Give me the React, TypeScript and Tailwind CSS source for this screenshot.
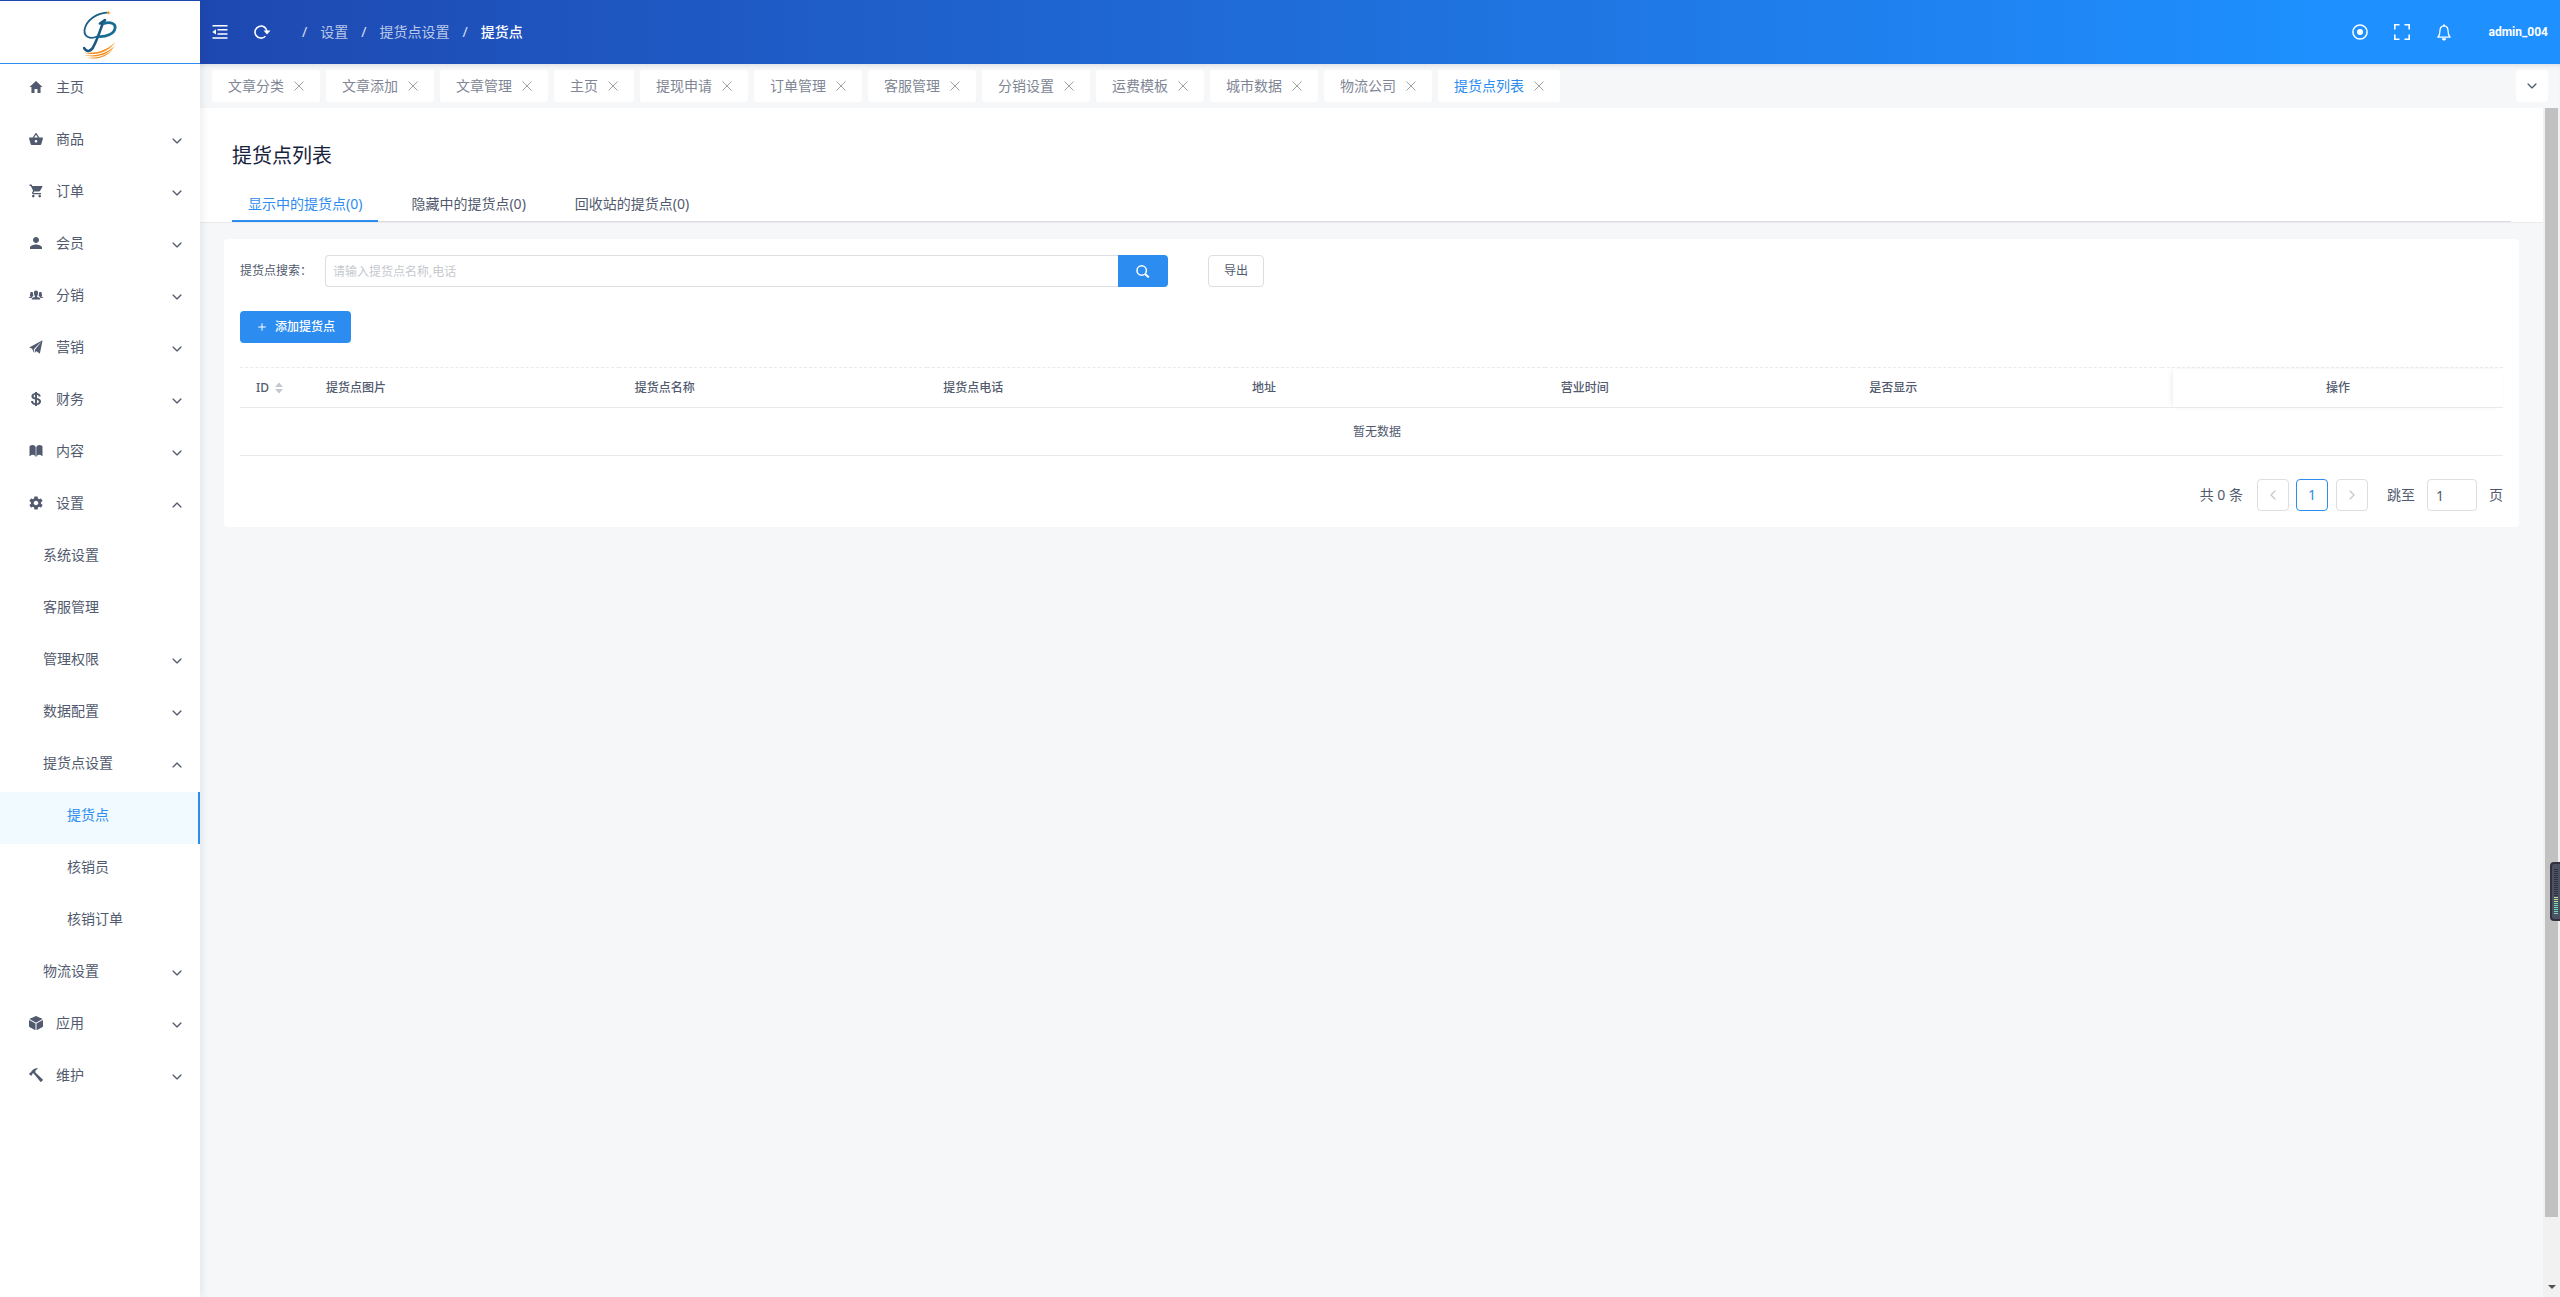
import React from "react";
import {
  IoIosArrowDown, IoIosArrowUp, IoIosArrowBack, IoIosArrowForward, IoMdHome, IoMdBasket, IoMdCart, IoMdPerson,
  IoIosPeople, IoIosPaperPlane, IoLogoUsd, IoIosBook, IoMdSettings, IoMdCube, IoMdHammer, IoMdAdd,
} from "react-icons/io";

type Icon = React.ComponentType<{ className?: string }>;

const FullscreenIcon = () => (
  <svg viewBox="0 0 16 16" className="size-4" fill="none" stroke="currentColor" strokeWidth="1.6">
    <path d="M0.8 5.500V0.800H5.500M10.500 0.800h4.700V5.500M15.200 10.500v4.700H10.500M5.500 15.200H0.800V10.500" />
  </svg>
);

const FoldIcon = () => (
  <svg viewBox="0 0 16 14" className="h-3.5 w-4" fill="currentColor">
    <path d="M0.500 0h15v1.500H0.500zM5.500 4h10v1.500h-10zM5.500 8.200h10v1.500h-10zM0.500 12.300h15v1.500H0.500zM4 4.200v5.400L0.300 6.900z" />
  </svg>
);

const ReloadIcon = () => (
  <svg viewBox="0 0 17 14" className="h-3.5 w-[17px]">
    <path d="M13 6.500A6 6 0 1 0 11.300 11.300" fill="none" stroke="currentColor" strokeWidth="1.600" />
    <path d="M9.600 5.600H16.500L13 9.400z" fill="currentColor" />
  </svg>
);

const TargetIcon = () => (
  <svg viewBox="0 0 16 16" className="size-4">
    <circle cx="8" cy="8" r="7.100" fill="none" stroke="currentColor" strokeWidth="1.500" />
    <circle cx="8" cy="8" r="3" fill="currentColor" />
  </svg>
);

const BellIcon = () => (
  <svg viewBox="0 0 14 17" className="h-[17px] w-3.5">
    <path d="M7 1.800C4.300 2 3 4 3 6.500C3 10 2.500 11.500 0.900 13.200H13.100C11.500 11.500 11 10 11 6.500C11 4 9.700 2 7 1.800z" fill="none" stroke="currentColor" strokeWidth="1.300" strokeLinejoin="round" />
    <path d="M6 0.500h2v1.500H6zM4.800 14.200h4.400C9 15.800 8 16.500 7 16.500S5 15.800 4.800 14.200z" fill="currentColor" />
  </svg>
);

const SearchIcon = () => (
  <svg viewBox="0 0 14 13" className="h-[13px] w-3.5" fill="none" stroke="currentColor" strokeWidth="1.500">
    <circle cx="5.700" cy="5.500" r="4.700" />
    <path d="M9 9l3.800 3.300" strokeWidth="2" />
  </svg>
);

const CrossIcon = () => (
  <svg viewBox="0 0 10 10" className="size-2.5" stroke="currentColor" strokeWidth="1">
    <path d="M0.500 0.500l9 9M9.500 0.500l-9 9" />
  </svg>
);

const Logo = () => (
  <svg viewBox="0 0 34 48" className="h-12 w-[34px]" fill="none" strokeLinecap="round" strokeLinejoin="round">
    <path d="M24 1.600C14 2 3 9 1.500 19C1 26 7 28.500 14 25.500" stroke="#1b5f86" strokeWidth="1.800" />
    <path d="M17 12.500L22 9L19.500 13C17 20 14 29 10.500 35.500C8.500 40 4 42 1 37" stroke="#1a5883" strokeWidth="2.600" />
    <path d="M21 12.500C27 10.500 33 12 32 17.500C31 23 23 26 15.500 25.500" stroke="#1b6c92" strokeWidth="2.800" />
    <path d="M25.500 0l.8 1.300 1.500.5-1.500.6-.8 1.300-.8-1.300-1.500-.6 1.500-.5z" fill="#f39121" />
    <path d="M1 41.500C15 43 26 38 32.500 30.500C27 40 14 46 1 41.500zM0.500 44C16 46 27 40 32 34.500C27 43 14 48 0.500 44zM3 46.500C16 48 25 43 30 38.500C24 46 13 49.500 3 46.500z" fill="#f39121" />
  </svg>
);

type Item = { label: string; icon?: Icon; level: number; arrow?: "up" | "down"; active?: boolean };

const menu: Item[] = [
  { label: "主页", icon: IoMdHome, level: 0 },
  { label: "商品", icon: IoMdBasket, level: 0, arrow: "down" },
  { label: "订单", icon: IoMdCart, level: 0, arrow: "down" },
  { label: "会员", icon: IoMdPerson, level: 0, arrow: "down" },
  { label: "分销", icon: IoIosPeople, level: 0, arrow: "down" },
  { label: "营销", icon: IoIosPaperPlane, level: 0, arrow: "down" },
  { label: "财务", icon: IoLogoUsd, level: 0, arrow: "down" },
  { label: "内容", icon: IoIosBook, level: 0, arrow: "down" },
  { label: "设置", icon: IoMdSettings, level: 0, arrow: "up" },
  { label: "系统设置", level: 1 },
  { label: "客服管理", level: 1 },
  { label: "管理权限", level: 1, arrow: "down" },
  { label: "数据配置", level: 1, arrow: "down" },
  { label: "提货点设置", level: 1, arrow: "up" },
  { label: "提货点", level: 2, active: true },
  { label: "核销员", level: 2 },
  { label: "核销订单", level: 2 },
  { label: "物流设置", level: 1, arrow: "down" },
  { label: "应用", icon: IoMdCube, level: 0, arrow: "down" },
  { label: "维护", icon: IoMdHammer, level: 0, arrow: "down" },
];

const pageTabs = ["文章分类", "文章添加", "文章管理", "主页", "提现申请", "订单管理", "客服管理", "分销设置", "运费模板", "城市数据", "物流公司", "提货点列表"];
const listTabs = ["显示中的提货点(0)", "隐藏中的提货点(0)", "回收站的提货点(0)"];
const columns = ["提货点图片", "提货点名称", "提货点电话", "地址", "营业时间", "是否显示"];
const indent = ["pl-7", "pl-[43px]", "pl-[67px]"];

function Sidebar() {
  return (
    <aside className="z-20 flex w-[200px] shrink-0 flex-col bg-white shadow-[2px_0_8px_rgba(29,35,41,0.08)]">
      <div className="flex h-16 shrink-0 items-center justify-center border-t border-b border-t-[#1e47b0] border-b-[#2d8cf0] pt-1.5">
        <Logo />
      </div>
      <nav>
        {menu.map(({ label, icon: ItemIcon, level, arrow, active }) => (
          <a
            key={label}
            href="#"
            className={`flex h-[52px] items-center pr-4 pb-1.5 ${indent[level]} ${active ? "border-r-2 border-[#2d8cf0] bg-[#f0faff] text-[#2d8cf0]" : ""}`}
          >
            {ItemIcon && <ItemIcon className="mr-3 size-4" />}
            <span>{label}</span>
            {arrow === "down" && <IoIosArrowDown className="mt-1 ml-auto size-3.5" />}
            {arrow === "up" && <IoIosArrowUp className="mt-1 ml-auto size-3.5" />}
          </a>
        ))}
      </nav>
    </aside>
  );
}

function Header() {
  return (
    <header className="flex h-16 shrink-0 items-center bg-linear-to-r from-[#1e48b1] to-[#1e90ff] to-90% px-3 text-white">
      <button aria-label="收起菜单" className="flex w-[42px]"><FoldIcon /></button>
      <button aria-label="刷新" className="flex w-12"><ReloadIcon /></button>
      <nav aria-label="breadcrumb" className="flex gap-[13px]">
        <span className="text-white/80">/</span>
        <a href="#" className="text-white/70">设置</a>
        <span className="text-white/80">/</span>
        <a href="#" className="text-white/70">提货点设置</a>
        <span className="text-white/80">/</span>
        <span className="font-medium">提货点</span>
      </nav>
      <div className="ml-auto flex items-center">
        <button aria-label="查看" className="flex w-[42px] justify-center"><TargetIcon /></button>
        <button aria-label="全屏" className="flex w-[42px] justify-center"><FullscreenIcon /></button>
        <button aria-label="通知" className="mr-6 flex w-[42px] justify-center"><BellIcon /></button>
        <button className="font-[Roboto] text-xs font-bold">admin_004</button>
      </div>
    </header>
  );
}

function PageTabs() {
  return (
    <div className="flex h-11 shrink-0 items-center gap-1.5 px-3 shadow-[inset_0_4px_5px_-3px_rgba(0,21,41,0.12)]">
      {pageTabs.map((tab, i) => (
        <div key={tab} className="flex h-8 items-center gap-2.5 rounded-[3px] bg-white px-4">
          <a href="#" className={i === pageTabs.length - 1 ? "text-[#2d8cf0]" : "text-[#808695]"}>{tab}</a>
          <button aria-label={`关闭${tab}`} className="text-[#a0a0a0]"><CrossIcon /></button>
        </div>
      ))}
      <button aria-label="更多" className="ml-auto flex size-8 items-center justify-center rounded-[3px] bg-white">
        <IoIosArrowDown className="size-3.5" />
      </button>
    </div>
  );
}

function SearchRow() {
  return (
    <div className="flex items-center text-xs">
      <label htmlFor="keyword" className="w-[85px] shrink-0">提货点搜索：</label>
      <input id="keyword" placeholder="请输入提货点名称,电话" className="h-8 w-1/3 max-w-[793px] grow rounded-l border border-r-0 border-[#dcdee2] px-[7px] placeholder:text-[#c5c8ce]" />
      <button aria-label="搜索" className="flex h-8 w-[50px] items-center justify-center rounded-r bg-[#2d8cf0] text-white"><SearchIcon /></button>
      <button className="ml-10 h-8 w-14 rounded border border-[#dcdee2]">导出</button>
    </div>
  );
}

function DataTable() {
  return (
    <table className="mt-6 w-full table-fixed border-t border-dashed border-[#e8eaec] text-xs">
      <colgroup>
        <col className="w-[70px]" />
        {columns.map((c) => <col key={c} />)}
        <col className="w-[341px]" />
      </colgroup>
      <thead>
        <tr className="h-10 border-b border-solid border-[#e8eaec] text-left">
          <th className="pl-4 font-medium">
            <button className="flex items-center gap-1.5">
              ID
              <svg viewBox="0 0 8 12" className="h-3 w-2" fill="#c5c8ce"><path d="M4 0.500l4 4.500H0zM4 11.500L0 7h8z" /></svg>
            </button>
          </th>
          {columns.map((c) => <th key={c} className="pl-4 font-medium">{c}</th>)}
          <th className="pl-[11px] text-center font-medium">
            <div className="h-[38px] leading-[38px] shadow-[-2px_0_6px_-2px_rgba(0,0,0,0.12)]">操作</div>
          </th>
        </tr>
      </thead>
      <tbody>
        <tr className="h-12 border-b border-solid border-[#e8eaec]">
          <td colSpan={8} className="pl-[11px] text-center">暂无数据</td>
        </tr>
      </tbody>
    </table>
  );
}

function Pagination() {
  return (
    <div className="mt-[23px] flex items-center justify-end">
      <span className="mr-3.5">共 0 条</span>
      <button aria-label="上一页" className="mr-[7px] flex size-8 items-center justify-center rounded border border-[#dcdee2] text-[#c5c8ce]"><IoIosArrowBack className="size-3.5" /></button>
      <button className="mr-2 size-8 rounded border border-[#2d8cf0] text-[#2d8cf0]">1</button>
      <button aria-label="下一页" className="mr-[19px] flex size-8 items-center justify-center rounded border border-[#dcdee2] text-[#c5c8ce]"><IoIosArrowForward className="size-3.5" /></button>
      <label htmlFor="page">跳至</label>
      <input id="page" defaultValue="1" className="mx-3 h-8 w-[50px] rounded border border-[#dcdee2] px-2" />
      <span>页</span>
    </div>
  );
}

export default function App() {
  return (
    <div className="flex h-screen overflow-hidden bg-[#f5f7f9] font-['Noto_Sans','Noto_Sans_CJK_SC',sans-serif] text-sm text-[#515a6e]">
      <Sidebar />
      <div className="flex min-w-0 flex-1 flex-col">
        <Header />
        <PageTabs />
        <div className="flex min-h-0 flex-1">
          <main className="min-w-0 flex-1">
            <div className="border-b border-[#e8eaec] bg-white px-8 pt-[34px]">
              <h1 className="text-xl leading-7 text-[#17233d]">提货点列表</h1>
              <nav className="mt-4 flex gap-[17px] border-b border-[#dcdee2]">
                {listTabs.map((tab, i) => (
                  <a key={tab} href="#" className={`-mb-px h-9 border-b-2 px-4 pt-2 ${i === 0 ? "border-[#2d8cf0] text-[#2d8cf0]" : "border-transparent"}`}>{tab}</a>
                ))}
              </nav>
            </div>
            <section className="mx-6 mt-4 rounded bg-white p-4">
              <SearchRow />
              <button className="mt-6 flex h-8 items-center gap-[7px] rounded bg-[#2d8cf0] px-4 text-xs font-medium text-white"><IoMdAdd className="size-3" />添加提货点</button>
              <DataTable />
              <Pagination />
            </section>
          </main>
          <div className="flex w-[17px] shrink-0 flex-col items-center bg-[#f1f1f1]">
            <div className="h-[1109px] w-[13px] shrink-0 bg-[#c1c1c1]" />
            <svg viewBox="0 0 8 4" className="mt-auto mb-2 h-1 w-2" fill="#505050"><path d="M0 0h8L4 4z" /></svg>
          </div>
        </div>
      </div>
      <div className="absolute top-[862px] right-0 z-30 flex h-[59px] w-2.5 flex-col items-center justify-center gap-px rounded-l border-2 border-r-0 border-[#30323e] bg-[#4c5164]">
        {Array.from({ length: 23 }, (_, i) => (
          <span key={i} className={`h-px w-1 ${i < 14 ? "bg-[#2d3040]" : i < 17 ? "bg-[#b5e08e]" : "bg-[#6fdcb8]"}`} />
        ))}
      </div>
    </div>
  );
}
